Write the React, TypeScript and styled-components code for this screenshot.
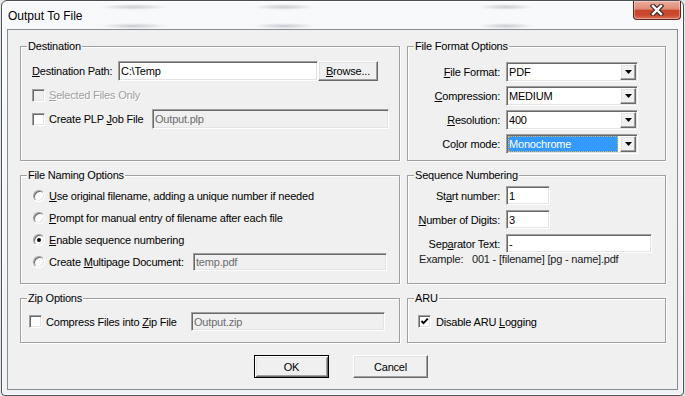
import styled, { createGlobalStyle, css } from "styled-components";

const GlobalStyle = createGlobalStyle`
  html, body {
    margin: 0;
    padding: 0;
    overflow: hidden;
    background: #e6e8eb;
  }
  body {
    font-family: "Liberation Sans", Arial, sans-serif;
    font-size: 11px;
    letter-spacing: -0.2px;
    color: #000;
  }
`;

// classic 3D edges
const sunken = css`
  border: 1px solid;
  border-color: #a0a0a0 #ffffff #ffffff #a0a0a0;
  box-shadow: inset 1px 1px 0 #696969, inset -1px -1px 0 #e3e3e3;
`;

const raised = css`
  border: 1px solid;
  border-color: #ffffff #696969 #696969 #ffffff;
  box-shadow: inset -1px -1px 0 #a0a0a0, inset 1px 1px 0 #e3e3e3;
`;

const blob = (x: number, y: number, rx: number) =>
  `radial-gradient(${rx}px 3px at ${x}px ${y}px, rgba(105, 110, 120, 0.32), rgba(105, 110, 120, 0))`;

const Window = styled.div`
  box-sizing: border-box;
  width: 683px;
  height: 396px;
  margin-left: 1px;
  display: flex;
  flex-direction: column;
  padding: 0 5px 5px;
  border: 1px solid #4b4f54;
  border-radius: 6px 6px 4px 4px;
  background: linear-gradient(#f8f9fb, #eff1f4);
  box-shadow: inset 0 0 0 1px rgba(255, 255, 255, 0.9);
`;

const TitleBar = styled.div`
  height: 28px;
  margin: 0 -5px;
  padding: 0 2px 0 6px;
  display: flex;
  justify-content: space-between;
  align-items: flex-start;
  background: ${[
    blob(132, 6, 34),
    blob(282, 6, 31),
    blob(504, 6, 28),
    blob(132, 25, 34),
    blob(282, 25, 31),
    blob(504, 25, 28),
  ].join(", ")};
`;

const Title = styled.span`
  padding-top: 8px;
  font-size: 12px;
  line-height: 14px;
  letter-spacing: 0;
  text-shadow: 0 0 6px #fff, 0 0 3px #fff;
`;

const CloseButton = styled.div`
  box-sizing: border-box;
  width: 48px;
  height: 19px;
  display: flex;
  align-items: center;
  justify-content: center;
  border: 1px solid #5e2419;
  border-top: none;
  border-radius: 0 0 4px 4px;
  background: linear-gradient(#e9ad9e 0%, #df8a74 45%, #c9452b 52%, #c94a30 78%, #dc7258 100%);
  box-shadow: inset 0 0 0 1px rgba(255, 255, 255, 0.35);
`;

const Client = styled.div`
  flex: 1;
  display: flex;
  flex-direction: column;
  border: 1px solid #878c92;
  background: #f0f0f0;
  padding: 16px 15px 0 12px;
`;

const Grid = styled.div`
  display: grid;
  grid-template-columns: 380px 259px;
  grid-template-rows: 115px 109px 45px;
  column-gap: 7px;
  row-gap: 14px;
`;

const Group = styled.div<{ $pad: string; $gap?: number }>`
  position: relative;
  box-sizing: border-box;
  display: flex;
  flex-direction: column;
  gap: ${(p) => p.$gap ?? 0}px;
  padding: ${(p) => p.$pad};
  border: 1px solid #a0a0a0;
  box-shadow: inset 1px 1px 0 #fff, 1px 1px 0 #fff;
`;

const Legend = styled.span`
  position: absolute;
  top: -8px;
  left: 6px;
  padding: 0 1px;
  line-height: 14px;
  background: #f0f0f0;
`;

const Row = styled.div<{ $h: number }>`
  display: flex;
  align-items: center;
  height: ${(p) => p.$h}px;
`;

const Key = styled.span`
  text-decoration: underline;
  text-underline-offset: 1px;
`;

const FieldLabel = styled.span<{ $w: number }>`
  width: ${(p) => p.$w}px;
  flex: none;
`;

const TextBox = styled.div<{ $w: number; $h: number; $disabled?: boolean }>`
  ${sunken};
  box-sizing: border-box;
  width: ${(p) => p.$w}px;
  height: ${(p) => p.$h}px;
  flex: none;
  display: flex;
  align-items: center;
  padding: 0 2px;
  background: ${(p) => (p.$disabled ? "#f0f0f0" : "#fff")};
  color: ${(p) => (p.$disabled ? "#6d6d6d" : "#000")};
  white-space: nowrap;
`;

const PushButton = styled.button<{ $w: number; $h: number; $default?: boolean }>`
  box-sizing: border-box;
  width: ${(p) => p.$w}px;
  height: ${(p) => p.$h}px;
  flex: none;
  padding: 0;
  font: inherit;
  letter-spacing: inherit;
  color: #000;
  background: #f0f0f0;
  ${(p) =>
    p.$default
      ? css`
          border: 1px solid #000;
          box-shadow: inset 1px 1px 0 #fff, inset -1px -1px 0 #696969, inset 2px 2px 0 #e3e3e3,
            inset -2px -2px 0 #a0a0a0;
        `
      : raised}
`;

const Choice = styled.label<{ $w?: number; $gap: number; $disabled?: boolean }>`
  display: flex;
  align-items: center;
  gap: ${(p) => p.$gap}px;
  width: ${(p) => (p.$w ? `${p.$w}px` : "auto")};
  flex: none;
  white-space: nowrap;
  color: ${(p) => (p.$disabled ? "#a0a0a0" : "#000")};
  text-shadow: ${(p) => (p.$disabled ? "1px 1px 0 #fff" : "none")};
`;

const CheckBox = styled.span<{ $disabled?: boolean }>`
  ${sunken};
  box-sizing: border-box;
  width: 13px;
  height: 13px;
  flex: none;
  display: flex;
  align-items: center;
  justify-content: center;
  background: ${(p) => (p.$disabled ? "#f0f0f0" : "#fff")};
`;

const RadioDot = styled.span<{ $checked?: boolean }>`
  box-sizing: border-box;
  width: 12px;
  height: 12px;
  flex: none;
  display: flex;
  align-items: center;
  justify-content: center;
  border-radius: 50%;
  border: 1px solid;
  border-color: #a0a0a0 #ffffff #ffffff #a0a0a0;
  box-shadow: inset 1px 1px 0 #696969, inset -1px -1px 0 #e3e3e3;
  background: #fff;

  &::after {
    content: "";
    width: 4px;
    height: 4px;
    border-radius: 50%;
    background: ${(p) => (p.$checked ? "#000" : "transparent")};
  }
`;

const FormGrid = styled.div<{ $rowH: number; $gap: number }>`
  display: grid;
  grid-template-columns: 92px auto;
  grid-auto-rows: ${(p) => p.$rowH}px;
  column-gap: 6px;
  row-gap: ${(p) => p.$gap}px;
  align-items: center;
  justify-items: start;
`;

const FormLabel = styled.span`
  justify-self: end;
  white-space: nowrap;
`;

const ComboBox = styled.div`
  ${sunken};
  box-sizing: border-box;
  width: 132px;
  height: 20px;
  padding: 1px;
  display: flex;
  background: #fff;
`;

const ComboValue = styled.span<{ $selected?: boolean }>`
  flex: 1;
  display: flex;
  align-items: center;
  padding-left: 1px;
  margin-right: 2px;
  ${(p) =>
    p.$selected &&
    css`
      background: #3399ff;
      color: #fff;
      outline: 1px dotted #d9b45f;
      outline-offset: -1px;
    `}
`;

const DropButton = styled.span`
  ${raised};
  box-sizing: border-box;
  width: 16px;
  height: 16px;
  display: flex;
  align-items: center;
  justify-content: center;
  background: #f0f0f0;
`;

const Example = styled.div`
  display: flex;
  line-height: 12px;
  padding-left: 11px;
  color: #1a1a1a;
`;

const ExampleKey = styled.span`
  width: 53px;
`;

const ButtonRow = styled.div`
  display: flex;
  justify-content: center;
  gap: 24px;
  margin-top: 12px;
`;

const CheckMark = () => (
  <svg width="9" height="9" viewBox="0 0 9 9">
    <path d="M1.5 4 L3.5 6.2 L7.8 1.6" fill="none" stroke="#000" strokeWidth="1.9" />
  </svg>
);

const Arrow = () => (
  <svg width="7" height="4" viewBox="0 0 7 4">
    <polygon points="0,0 7,0 3.5,4" fill="#000" />
  </svg>
);

const CloseGlyph = () => (
  <svg width="14" height="12" viewBox="0 0 14 12">
    <path d="M3 2 L11 10 M11 2 L3 10" stroke="#3b2a27" strokeWidth="4.6" strokeLinecap="square" />
    <path d="M3 2 L11 10 M11 2 L3 10" stroke="#fff" strokeWidth="2.4" strokeLinecap="square" />
  </svg>
);

const Combo = ({ value, selected }: { value: string; selected?: boolean }) => (
  <ComboBox>
    <ComboValue $selected={selected}>{value}</ComboValue>
    <DropButton>
      <Arrow />
    </DropButton>
  </ComboBox>
);

export default function App() {
  return (
    <>
      <GlobalStyle />
      <Window>
        <TitleBar>
          <Title>Output To File</Title>
          <CloseButton>
            <CloseGlyph />
          </CloseButton>
        </TitleBar>
        <Client>
          <Grid>
            <Group $pad="14px 0 0 11px" $gap={4}>
              <Legend>Destination</Legend>
              <Row $h={20}>
                <FieldLabel $w={86}>
                  <Key>D</Key>estination Path:
                </FieldLabel>
                <TextBox $w={200} $h={20}>C:\Temp</TextBox>
                <PushButton $w={60} $h={20}>
                  <Key>B</Key>rowse...
                </PushButton>
              </Row>
              <Row $h={20}>
                <Choice $gap={4} $disabled>
                  <CheckBox $disabled />
                  <span>
                    <Key>S</Key>elected Files Only
                  </span>
                </Choice>
              </Row>
              <Row $h={20}>
                <Choice $gap={4} $w={120}>
                  <CheckBox />
                  <span>
                    Create PLP <Key>J</Key>ob File
                  </span>
                </Choice>
                <TextBox $w={237} $h={20} $disabled>
                  Output.plp
                </TextBox>
              </Row>
            </Group>

            <Group $pad="15px 0 0 0">
              <Legend>File Format Options</Legend>
              <FormGrid $rowH={20} $gap={4}>
                <FormLabel>
                  <Key>F</Key>ile Format:
                </FormLabel>
                <Combo value="PDF" />
                <FormLabel>
                  <Key>C</Key>ompression:
                </FormLabel>
                <Combo value="MEDIUM" />
                <FormLabel>
                  <Key>R</Key>esolution:
                </FormLabel>
                <Combo value="400" />
                <FormLabel>
                  Co<Key>l</Key>or mode:
                </FormLabel>
                <Combo value="Monochrome" selected />
              </FormGrid>
            </Group>

            <Group $pad="10px 0 0 12px" $gap={2}>
              <Legend>File Naming Options</Legend>
              <Row $h={20}>
                <Choice $gap={4}>
                  <RadioDot />
                  <span>
                    <Key>U</Key>se original filename, adding a unique number if needed
                  </span>
                </Choice>
              </Row>
              <Row $h={20}>
                <Choice $gap={4}>
                  <RadioDot />
                  <span>
                    <Key>P</Key>rompt for manual entry of filename after each file
                  </span>
                </Choice>
              </Row>
              <Row $h={20}>
                <Choice $gap={4}>
                  <RadioDot $checked />
                  <span>
                    <Key>E</Key>nable sequence numbering
                  </span>
                </Choice>
              </Row>
              <Row $h={20}>
                <Choice $gap={4} $w={160}>
                  <RadioDot />
                  <span>
                    Create <Key>M</Key>ultipage Document:
                  </span>
                </Choice>
                <TextBox $w={194} $h={18} $disabled>
                  temp.pdf
                </TextBox>
              </Row>
            </Group>

            <Group $pad="10px 0 0 0">
              <Legend>Sequence Numbering</Legend>
              <FormGrid $rowH={19} $gap={5}>
                <FormLabel>
                  St<Key>a</Key>rt number:
                </FormLabel>
                <TextBox $w={44} $h={19}>1</TextBox>
                <FormLabel>
                  <Key>N</Key>umber of Digits:
                </FormLabel>
                <TextBox $w={44} $h={19}>3</TextBox>
                <FormLabel>
                  Sep<Key>a</Key>rator Text:
                </FormLabel>
                <TextBox $w={146} $h={19}>-</TextBox>
              </FormGrid>
              <Example>
                <ExampleKey>Example:</ExampleKey>
                001 - [filename] [pg - name].pdf
              </Example>
            </Group>

            <Group $pad="13px 0 0 8px">
              <Legend>Zip Options</Legend>
              <Row $h={19}>
                <Choice $gap={4} $w={162}>
                  <CheckBox />
                  <span>
                    Compress Files into <Key>Z</Key>ip File
                  </span>
                </Choice>
                <TextBox $w={194} $h={19} $disabled>
                  Output.zip
                </TextBox>
              </Row>
            </Group>

            <Group $pad="13px 0 0 10px">
              <Legend>ARU</Legend>
              <Row $h={19}>
                <Choice $gap={5}>
                  <CheckBox>
                    <CheckMark />
                  </CheckBox>
                  <span>
                    Disable ARU <Key>L</Key>ogging
                  </span>
                </Choice>
              </Row>
            </Group>
          </Grid>

          <ButtonRow>
            <PushButton $w={75} $h={23} $default>
              OK
            </PushButton>
            <PushButton $w={75} $h={23}>
              Cancel
            </PushButton>
          </ButtonRow>
        </Client>
      </Window>
    </>
  );
}
